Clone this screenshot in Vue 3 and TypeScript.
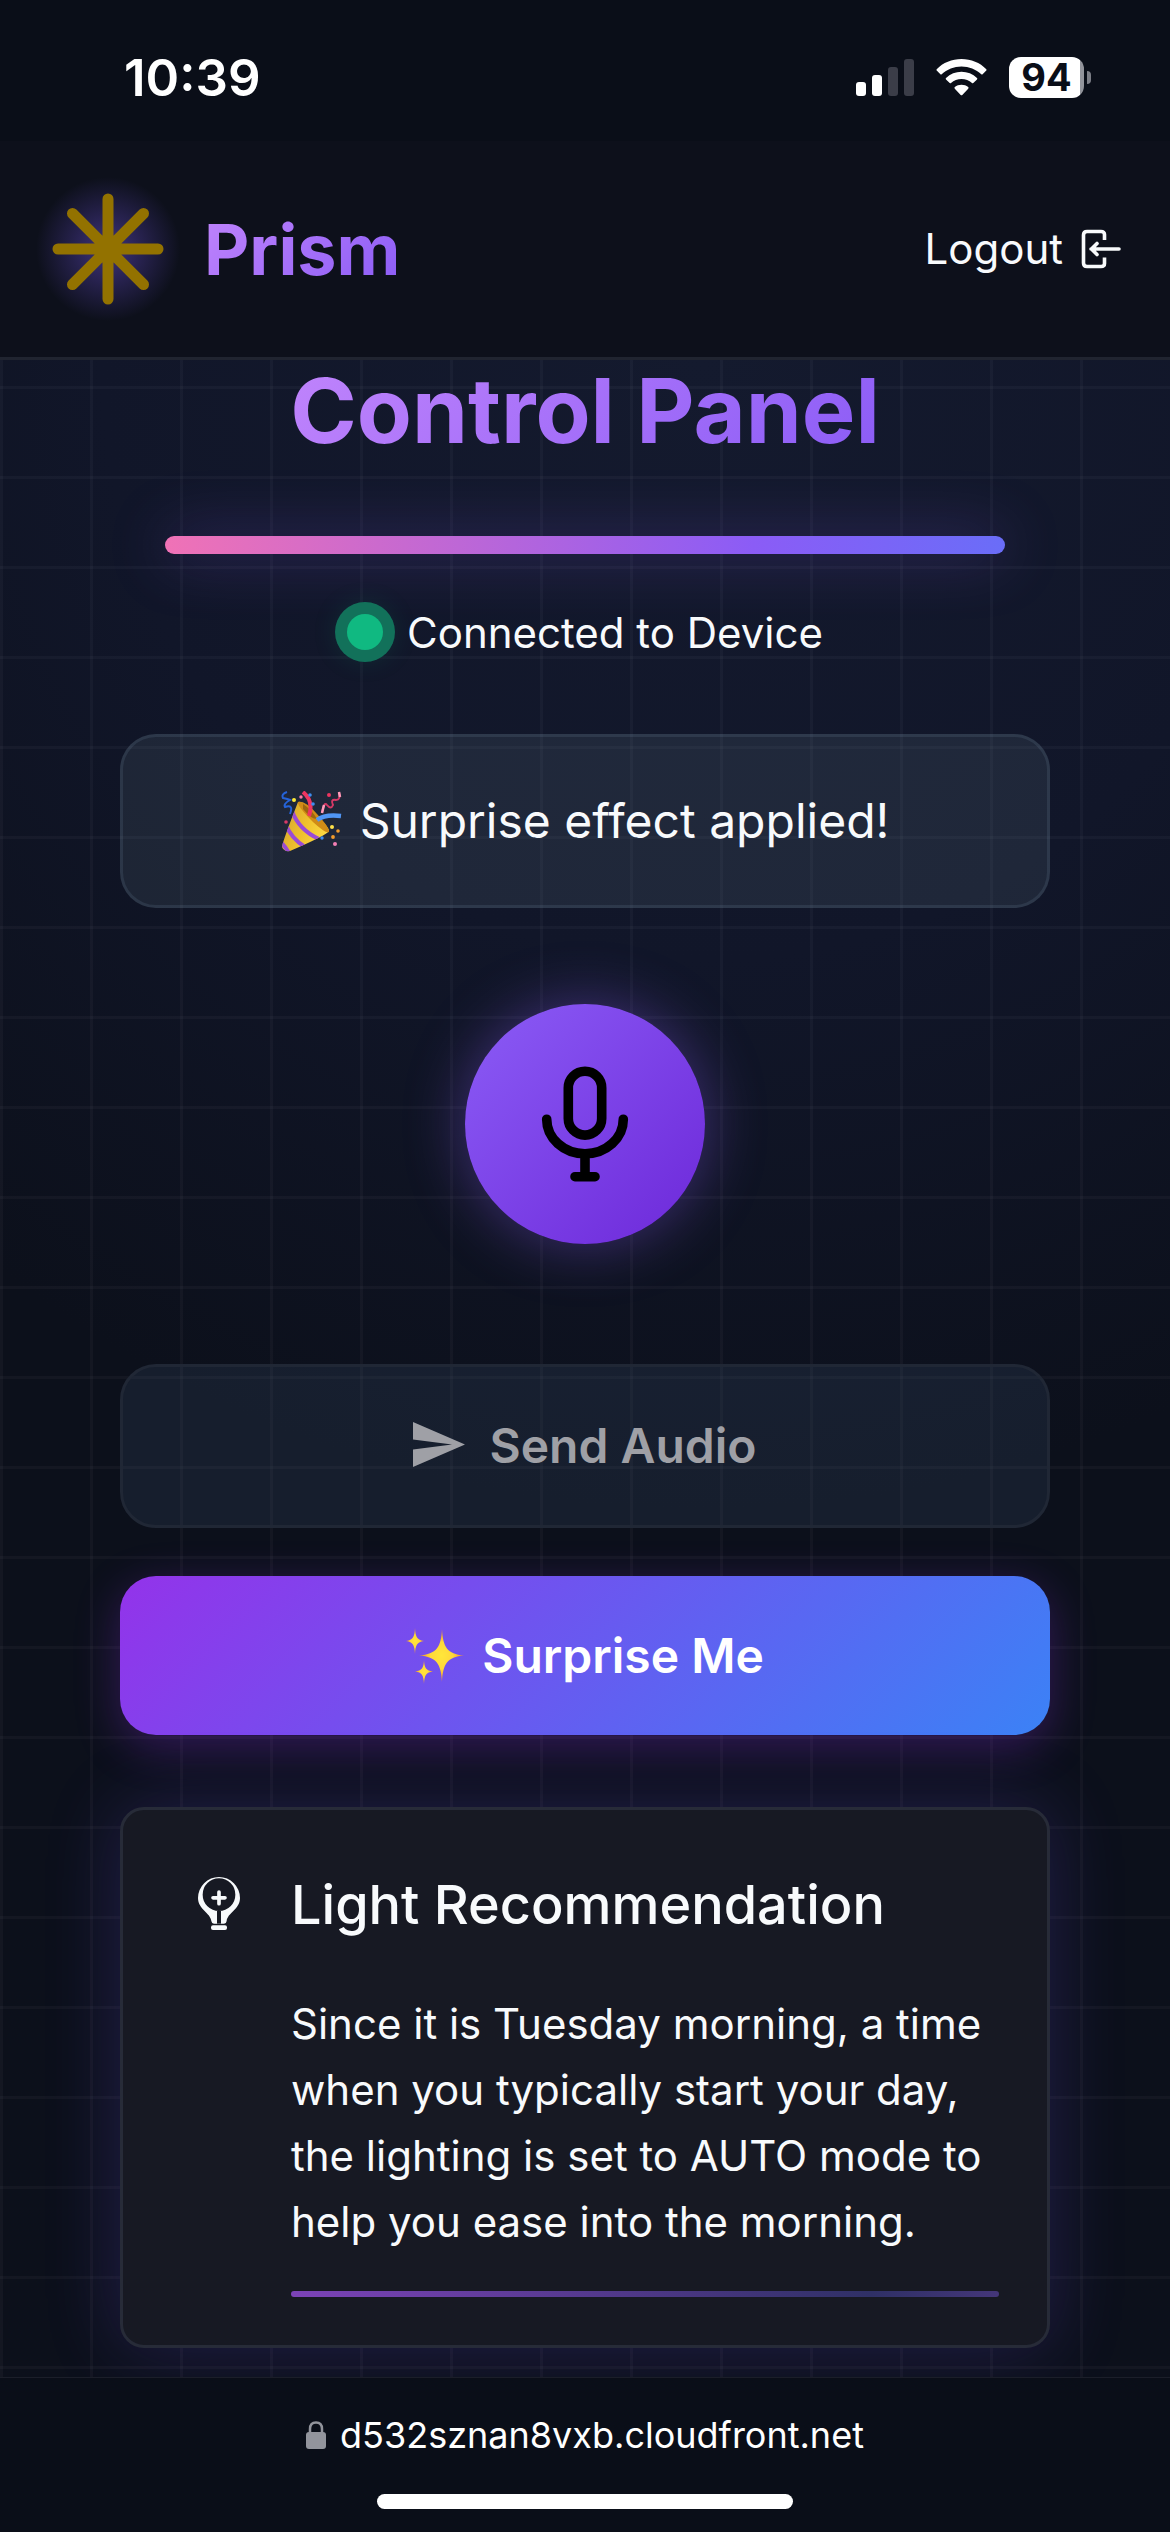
<script setup lang="ts">
import { ref } from 'vue'

const title = 'Control Panel'
const hasRecording = ref(false)
const notice = ref('Surprise effect applied!')
const recommendation =
  'Since it is Tuesday morning, a time when you typically start your day, the lighting is set to AUTO mode to help you ease into the morning.'

const signalBars = [
  { x: 0, height: 14, on: true },
  { x: 16, height: 21, on: true },
  { x: 32, height: 29, on: false },
  { x: 48, height: 37, on: false },
]

function surprise(): void {
  notice.value = 'Surprise effect applied!'
}
</script>

<template>
  <div class="screen">
    <div class="status-bar">
      <span class="time">10:39</span>
      <div class="indicators">
        <svg width="58" height="37" viewBox="0 0 58 37" aria-hidden="true">
          <rect
            v-for="bar in signalBars"
            :key="bar.x"
            :x="bar.x"
            :y="37 - bar.height"
            width="10"
            :height="bar.height"
            rx="3"
            :fill="bar.on ? '#fff' : '#3b3d48'"
          />
        </svg>
        <svg class="wifi" width="51" height="37" viewBox="0 0 51 37" fill="#fff" aria-hidden="true">
          <path d="M25.5 0C35 0 44 3.700 50.300 10.200Q50.900 10.900 50.300 11.600L46.600 15.200Q46 15.800 45.300 15.200C40 10.200 33 7.400 25.500 7.400S11 10.200 5.700 15.200Q5 15.800 4.400 15.200L.7 11.600Q.1 10.900.7 10.200C7 3.700 16 0 25.500 0Z" />
          <path d="M25.500 12.800C31.300 12.800 36.800 15 41 19Q41.700 19.700 41 20.400L37.300 24Q36.600 24.600 36 24C33.100 21.500 29.400 20 25.500 20S17.900 21.500 15 24Q14.400 24.600 13.700 24L10 20.400Q9.300 19.700 10 19C14.200 15 19.700 12.800 25.500 12.800Z" />
          <path d="M25.500 25.700C28 25.700 30.300 26.500 32.200 28.100Q33 28.900 32.200 29.700L26.300 35.900Q25.500 36.700 24.700 35.900L18.800 29.700Q18 28.900 18.800 28.100C20.700 26.500 23 25.700 25.500 25.700Z" />
        </svg>
        <div class="battery">
          <span class="battery-level">94</span>
          <span class="battery-tip"></span>
        </div>
      </div>
    </div>

    <header class="top-bar">
      <div class="brand">
        <svg class="logo" width="144" height="144" viewBox="0 0 144 144" aria-hidden="true">
          <defs>
            <radialGradient id="logo-glow">
              <stop offset="0" stop-color="#7c5cf6" stop-opacity=".45" />
              <stop offset=".5" stop-color="#7c5cf6" stop-opacity=".22" />
              <stop offset="1" stop-color="#7c5cf6" stop-opacity="0" />
            </radialGradient>
          </defs>
          <circle cx="72" cy="72" r="72" fill="url(#logo-glow)" />
          <path
            d="M72 22v100M22 72h100M36.500 36.500l71 71M107.500 36.500l-71 71"
            stroke="#937200"
            stroke-width="11"
            stroke-linecap="round"
          />
        </svg>
        <span class="brand-name">Prism</span>
      </div>
      <button class="logout" type="button">
        Logout
        <svg width="40" height="40" viewBox="0 0 40 40" fill="none" stroke="currentColor" stroke-width="3.600" stroke-linecap="round" stroke-linejoin="round" aria-hidden="true">
          <path d="M23.500 11V5.500Q23.500 2.500 20 2.500H6Q2.500 2.500 2.500 6V34Q2.500 37.500 6 37.500H20Q23.500 37.500 23.500 34.500V28.500" stroke-linecap="butt" />
          <path d="M38 20H10M16 14.500L10.500 20L16 25.500" />
        </svg>
      </button>
    </header>

    <main class="content">
      <h1>{{ title }}</h1>
      <div class="rainbow"></div>

      <p class="connection"><span class="dot"></span>Connected to Device</p>

      <p class="notice" role="status">
        <svg width="61" height="61" viewBox="0 0 61 61" fill="none" aria-hidden="true">
          <defs>
            <linearGradient id="cone" x1="0" y1="0" x2="1" y2=".4">
              <stop offset="0" stop-color="#c99a2c" />
              <stop offset=".55" stop-color="#f0c22e" />
              <stop offset="1" stop-color="#ffe14a" />
            </linearGradient>
            <clipPath id="cone-clip">
              <path d="M17 11Q22 9 35 24Q48 36 48 40Q46 44 9 60Q3 61 1 56Q1 52 17 11Z" />
            </clipPath>
          </defs>
          <g clip-path="url(#cone-clip)">
            <path d="M0 0H61V61H0Z" fill="url(#cone)" />
            <path d="M11 20Q18 39 38 48M5 34Q10 47 24 56M-1 50Q4 55 8 62" stroke="#9a4bd6" stroke-width="4" />
          </g>
          <path d="M17 11Q24 9 36 23Q49 37 48 41Q45 43 32 31Q16 15 17 11Z" fill="#d08b16" />
          <path d="M22 13Q31 19 36 28Q30 28 22 18Z" fill="#9c650f" />
          <path d="M22 1Q33 10 28 25" stroke="#ee3560" stroke-width="4" />
          <path d="M36 29Q44 23 60 25" stroke="#5096f4" stroke-width="4.500" />
          <path d="M41 22Q43 10 46 14Q50 19 52 14Q49 8 55 9Q60 9 58 1" stroke="#d63966" stroke-width="2" />
          <path d="M41 22L43 14M58 1L59 6" stroke="#ff9dbb" stroke-width="2.500" />
          <path d="M6 1Q0 3 2 7Q7 8 9 9Q2 13 4 16Q13 13 9 23" stroke="#2563d9" stroke-width="2" />
          <circle cx="13" cy="9" r="2" fill="#ffe936" />
          <circle cx="20" cy="6" r="1.700" fill="#ff7ca5" />
          <circle cx="29" cy="4" r="1.800" fill="#3d8df0" />
          <circle cx="32" cy="13" r="1.800" fill="#3d8df0" />
          <circle cx="48" cy="4" r="2" fill="#ee3560" />
          <circle cx="5" cy="31" r="1.800" fill="#d63966" />
          <circle cx="51" cy="36" r="2" fill="#ffe14a" />
          <circle cx="57" cy="40" r="1.800" fill="#f39c2b" />
          <circle cx="52" cy="46" r="1.900" fill="#f39c2b" />
          <circle cx="41" cy="47" r="1.700" fill="#3d8df0" />
          <circle cx="54" cy="53" r="2" fill="#f47fb5" />
        </svg>
        {{ notice }}
      </p>

      <button class="mic" type="button" aria-label="Record audio">
        <svg width="120" height="120" viewBox="0 0 120 120" fill="none" stroke="#000" stroke-width="9.600" stroke-linecap="round" aria-hidden="true">
          <rect x="43.300" y="7.300" width="33.400" height="63.800" rx="16.700" />
          <path d="M21.700 55.200A38.300 34.500 0 0 0 98.300 55.200M60 90V112M50 112.700H70" />
        </svg>
      </button>

      <div class="actions">
        <button class="btn send" type="button" :disabled="!hasRecording">
          <svg width="52" height="48" viewBox="0 0 52 48" fill="currentColor" aria-hidden="true">
            <path d="M0 0L52 22.500L0 45V27.500L39 22.500L0 17.500Z" />
          </svg>
          Send Audio
        </button>
        <button class="btn surprise" type="button" @click="surprise">
          <svg width="58" height="56" viewBox="0 0 58 56" aria-hidden="true">
            <defs>
              <radialGradient id="spark">
                <stop offset="0" stop-color="#ffe63a" />
                <stop offset=".5" stop-color="#ffd83a" />
                <stop offset="1" stop-color="#f08a2c" />
              </radialGradient>
            </defs>
            <g fill="url(#spark)">
              <path d="M36 1C37 19 41 26 58 27.500C41 29 37 36 36 54C35 36 31 29 13 27.500C31 26 35 19 36 1Z" />
              <path d="M9 0C9.500 9 11 12 18 13C11 14 9.500 17 9 26C8.500 17 7 14 0 13C7 12 8.500 9 9 0Z" />
              <path d="M18 32C18.500 40 20 42.500 27 43.500C20 44.500 18.500 47 18 56C17.500 47 16 44.500 9 43.500C16 42.500 17.500 40 18 32Z" />
            </g>
          </svg>
          Surprise Me
        </button>
      </div>

      <section class="card">
        <div class="card-icon">
          <svg width="42" height="53" viewBox="84 74 126 159" fill="currentColor" aria-hidden="true">
            <path
              fill-rule="evenodd"
              d="M147 74A63 63 0 0 1 210 137C210 171 172 182 170 206Q169 214 162 214H132Q125 214 124 206C122 182 84 171 84 137A63 63 0 0 1 147 74ZM147 78A49 49 0 0 0 147 176A49 49 0 0 0 147 78ZM141 176V215H153V176Z"
            />
            <rect x="123" y="219" width="48" height="14" rx="6" />
            <path d="M147 119V154M129 136.500H165" stroke="currentColor" stroke-width="11" stroke-linecap="round" />
          </svg>
        </div>
        <div class="card-body">
          <h2>Light Recommendation</h2>
          <p>{{ recommendation }}</p>
          <div class="accent"></div>
        </div>
      </section>
    </main>

    <footer class="browser-bar">
      <div class="address">
        <svg width="20" height="28" viewBox="0 0 20 28" aria-hidden="true">
          <rect y="11" width="20" height="17" rx="3" fill="#92949c" />
          <path d="M4 12V8Q4 1.500 10 1.500T16 8V12" fill="none" stroke="#92949c" stroke-width="2.500" />
        </svg>
        d532sznan8vxb.cloudfront.net
      </div>
      <div class="home-indicator"></div>
    </footer>
  </div>
</template>

<style>
body {
  margin: 0;
  background: #0b0f19;
}
</style>

<style scoped>
.screen {
  display: flex;
  flex-direction: column;
  min-height: 100vh;
  overflow-x: hidden;
  color: #f8fafc;
  background: #0b0f19;
  font-family: Inter, "Liberation Sans", sans-serif;
  font-size: 42px;
}

button {
  font-family: inherit;
  color: inherit;
  border: 0;
  margin: 0;
  cursor: pointer;
}

h1,
h2,
p {
  margin: 0;
}

svg {
  display: block;
  flex: none;
}

.status-bar {
  display: flex;
  align-items: center;
  justify-content: space-between;
  box-sizing: border-box;
  height: 141px;
  padding: 14px 79px 0 124px;
  background: #0a0e18;
}

.time {
  font-size: 51px;
  font-weight: 600;
  color: #fff;
}

.indicators {
  display: flex;
  align-items: center;
  gap: 22px;
}

.battery {
  display: flex;
  align-items: center;
  gap: 3px;
}

.battery-level {
  width: 75px;
  border-radius: 12px;
  background: linear-gradient(90deg, #fff 71px, #92949b 71px);
  color: #0a0e18;
  font-size: 38px;
  font-weight: 700;
  line-height: 41px;
  text-align: center;
}

.battery-tip {
  width: 4px;
  height: 13px;
  border-radius: 0 6px 6px 0;
  background: #7c7e86;
}

.top-bar {
  display: flex;
  align-items: center;
  justify-content: space-between;
  padding: 36px 49px 36px 36px;
  border-bottom: 3px solid #202430;
  background: #0d101b;
}

.brand {
  display: flex;
  align-items: center;
  gap: 24px;
}

.brand-name,
h1 {
  background: linear-gradient(135deg, #c084fc, #8b5cf6);
  -webkit-background-clip: text;
  background-clip: text;
  color: transparent;
  font-weight: 700;
}

.brand-name {
  font-size: 70px;
}

.logout {
  display: flex;
  align-items: center;
  gap: 18px;
  padding: 0;
  background: none;
  font-size: 42px;
  line-height: 48px;
}

.content {
  display: flex;
  flex: 1;
  flex-direction: column;
  align-items: center;
  padding: 0 120px 29px;
  background:
    linear-gradient(90deg, rgba(255, 255, 255, 0.03) 3px, transparent 3px) 0 0 / 90px 90px,
    linear-gradient(rgba(255, 255, 255, 0.03) 3px, transparent 3px) 0 26px / 90px 90px,
    radial-gradient(circle at 60% 0, #141a2e 0, #111629 600px, #0c101b 1150px);
}

h1 {
  font-size: 90px;
  line-height: 102px;
}

.rainbow {
  align-self: stretch;
  height: 18px;
  margin: 74px 45px 0;
  border-radius: 9px;
  background: linear-gradient(90deg, #f072b6, #8b5cf6 70%, #6a6df8);
  box-shadow: 0 0 60px rgba(139, 92, 246, 0.4);
}

.connection {
  display: flex;
  align-items: center;
  gap: 24px;
  height: 60px;
  margin-top: 48px;
}

.dot {
  width: 36px;
  height: 36px;
  border-radius: 50%;
  background: #10b981;
  box-shadow: 0 0 0 12px #12715a, 0 0 30px 6px rgba(16, 185, 129, 0.2);
}

.notice {
  display: flex;
  align-items: center;
  justify-content: center;
  align-self: stretch;
  gap: 18px;
  margin-top: 72px;
  padding: 48px;
  border: 3px solid rgba(148, 178, 204, 0.12);
  border-radius: 36px;
  background: rgba(148, 178, 190, 0.11);
  font-size: 48px;
  line-height: 72px;
}

.mic {
  display: grid;
  place-items: center;
  width: 240px;
  height: 240px;
  margin-top: 96px;
  padding: 0;
  border-radius: 50%;
  background: linear-gradient(135deg, #8b5cf6, #6d28d9);
  box-shadow: 0 0 60px rgba(139, 92, 246, 0.4);
}

.actions {
  display: flex;
  flex-direction: column;
  align-self: stretch;
  gap: 48px;
  margin-top: 120px;
}

.btn {
  display: flex;
  align-items: center;
  justify-content: center;
  gap: 24px;
  padding: 48px;
  border-radius: 36px;
  font-size: 48px;
  font-weight: 600;
  line-height: 62px;
}

.send {
  border: 3px solid #202735;
  background: rgba(66, 92, 120, 0.2);
  color: #9fa0a6;
}

.surprise {
  gap: 18px;
  line-height: 63px;
  background: linear-gradient(135deg, #9333ea, #3b82f6);
  box-shadow: 0 12px 45px rgba(147, 51, 234, 0.3);
  color: #fff;
}

.card {
  display: flex;
  align-self: stretch;
  gap: 36px;
  margin-top: 72px;
  padding: 57px 48px 48px 60px;
  border: 3px solid #272b38;
  border-radius: 24px;
  background: #171923;
  box-shadow: 0 0 75px rgba(112, 84, 240, 0.22);
}

.card-icon {
  display: grid;
  place-items: center;
  width: 72px;
  height: 72px;
}

.card-body {
  flex: 1;
}

h2 {
  font-size: 54px;
  font-weight: 500;
  line-height: 76px;
}

.card-body p {
  margin-top: 48px;
  line-height: 66px;
}

.accent {
  height: 6px;
  margin-top: 36px;
  border-radius: 3px;
  background: linear-gradient(90deg, #7c43b8, #2f3066 82%, #443679);
}

.browser-bar {
  display: flex;
  flex-direction: column;
  align-items: center;
  gap: 35px;
  padding: 33px 24px 24px;
  border-top: 1px solid #1b1e29;
  background: #0a0e18;
}

.address {
  display: flex;
  align-items: center;
  gap: 14px;
  color: #fff;
  font-size: 36px;
  line-height: 48px;
}

.home-indicator {
  width: 37%;
  height: 15px;
  border-radius: 8px;
  background: #fff;
}
</style>
